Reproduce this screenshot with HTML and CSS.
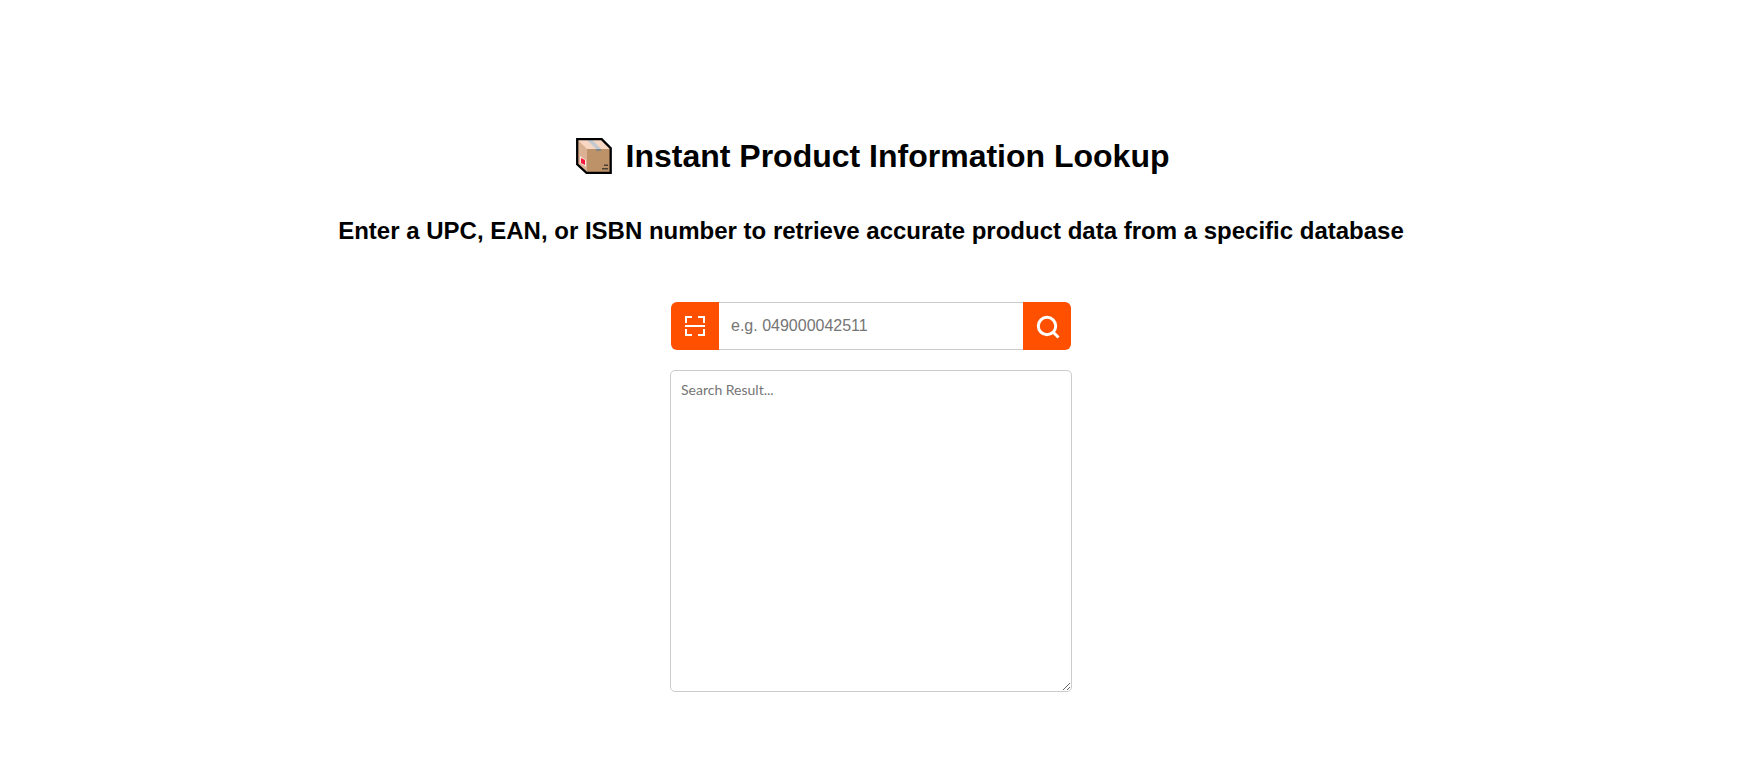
FILE: index.html
```html
<!DOCTYPE html>
<html lang="en">
<head>
<meta charset="utf-8">
<title>Instant Product Information Lookup</title>
<link rel="stylesheet" href="styles.css">
</head>
<body>
<main class="page">
  <h1 class="title">
    <svg class="box-icon" width="36" height="36" viewBox="0 0 36 36">
      <path fill="#f8d6c4" d="M1 1h24.500l9 9v2H11z"/>
      <path fill="#dbb193" d="M1 1l10 10v24L1 26z"/>
      <path fill="#bd9268" d="M11 11h24v24H11z"/>
      <path fill="#c3c9cf" d="M11 2h5.500l8.500 9h-5z"/>
      <path fill="#848484" d="M20 11h5v2h-5z"/>
      <path fill="#ffe4e0" d="M4 18l6 4v7l-6-4z"/>
      <path fill="#f51b3c" d="M5 20l4 2v5l-4-2z"/>
      <path fill="#4c4034" d="M28 26.500h4V28h-4zM26 30h6v1.500h-6z"/>
      <path fill="none" stroke="#000" stroke-width="2.300" d="M1.200 1.200h24.500l9 9v24.600H10.500l-9.300-8.500z"/>
    </svg>
    <span>Instant Product Information Lookup</span>
  </h1>
  <h2 class="subtitle">Enter a UPC, EAN, or ISBN number to retrieve accurate product data from a specific database</h2>
  <div class="search">
    <button class="btn btn-scan" aria-label="Scan">
      <svg width="20" height="20" viewBox="0 0 20 20" fill="none" stroke="#fff" stroke-width="2">
        <path d="M1 7V1h6M13 1h6v6M1 13v6h6M13 19h6v-6M0 10h20"/>
      </svg>
    </button>
    <input class="code" type="text" placeholder="e.g. 049000042511">
    <button class="btn btn-search" aria-label="Search">
      <svg width="24" height="24" viewBox="0 0 24 24" fill="none" stroke="#fff" stroke-width="3">
        <circle cx="11" cy="11" r="8.700"/><path d="M16.500 16.500l6 6"/>
      </svg>
    </button>
  </div>
  <textarea class="result" placeholder="Search Result..."></textarea>
</main>
</body>
</html>
```
FILE: styles.css
```css
* { box-sizing: border-box; }
body { margin: 0; background: #fff; color: #000; font-family: "Liberation Sans", Arial, sans-serif; }
.page { display: flex; flex-direction: column; align-items: center; padding-top: 138px; }
.title { display: flex; align-items: center; gap: 14px; height: 36px; margin: 0; padding-left: 3px; font-size: 32px; line-height: 37px; white-space: nowrap; }
.subtitle { margin: 43px 0 0; font-size: 24px; line-height: 28px; white-space: nowrap; }
.search { display: flex; width: 400px; height: 48px; margin-top: 57px; }
.btn { display: flex; align-items: center; justify-content: center; width: 48px; height: 48px; padding: 0; border: 0; background: #ff5000; }
.btn-scan { border-radius: 6px 0 0 6px; }
.btn-search { border-radius: 0 6px 6px 0; padding: 2px 0 0 2px; }
.code { flex: 1; min-width: 0; height: 48px; padding: 0 12px; border: 1px solid #ccc; border-width: 1px 0; outline: 0; font: 16px "Liberation Sans", Arial, sans-serif; }
.result { width: 402px; height: 322px; margin: 20px 0 0; padding: 10px; border: 1px solid #ccc; border-radius: 5px; outline: 0; font: 14px Lato, sans-serif; }
```
